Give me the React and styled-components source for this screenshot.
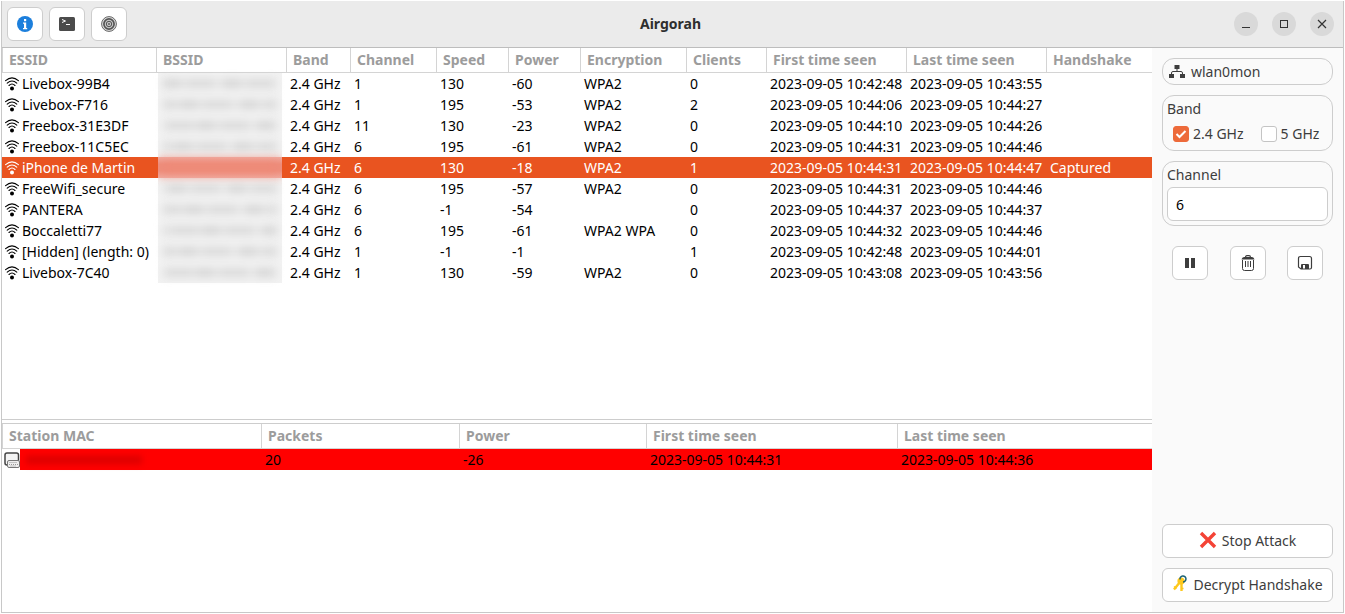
import React, { useState } from 'react';
import styled, { createGlobalStyle } from 'styled-components';

const networks = [
  { essid: 'Livebox-99B4', channel: 1, speed: 130, power: -60, enc: 'WPA2', clients: 0, first: '2023-09-05 10:42:48', last: '2023-09-05 10:43:55' },
  { essid: 'Livebox-F716', channel: 1, speed: 195, power: -53, enc: 'WPA2', clients: 2, first: '2023-09-05 10:44:06', last: '2023-09-05 10:44:27' },
  { essid: 'Freebox-31E3DF', channel: 11, speed: 130, power: -23, enc: 'WPA2', clients: 0, first: '2023-09-05 10:44:10', last: '2023-09-05 10:44:26' },
  { essid: 'Freebox-11C5EC', channel: 6, speed: 195, power: -61, enc: 'WPA2', clients: 0, first: '2023-09-05 10:44:31', last: '2023-09-05 10:44:46' },
  { essid: 'iPhone de Martin', channel: 6, speed: 130, power: -18, enc: 'WPA2', clients: 1, first: '2023-09-05 10:44:31', last: '2023-09-05 10:44:47', handshake: 'Captured' },
  { essid: 'FreeWifi_secure', channel: 6, speed: 195, power: -57, enc: 'WPA2', clients: 0, first: '2023-09-05 10:44:31', last: '2023-09-05 10:44:46' },
  { essid: 'PANTERA', channel: 6, speed: -1, power: -54, enc: '', clients: 0, first: '2023-09-05 10:44:37', last: '2023-09-05 10:44:37' },
  { essid: 'Boccaletti77', channel: 6, speed: 195, power: -61, enc: 'WPA2 WPA', clients: 0, first: '2023-09-05 10:44:32', last: '2023-09-05 10:44:46' },
  { essid: '[Hidden] (length: 0)', channel: 1, speed: -1, power: -1, enc: '', clients: 1, first: '2023-09-05 10:42:48', last: '2023-09-05 10:44:01' },
  { essid: 'Livebox-7C40', channel: 1, speed: 130, power: -59, enc: 'WPA2', clients: 0, first: '2023-09-05 10:43:08', last: '2023-09-05 10:43:56' },
];

const networkColumns = [
  ['ESSID', 155],
  ['BSSID', 130],
  ['Band', 64],
  ['Channel', 86],
  ['Speed', 72],
  ['Power', 72],
  ['Encryption', 106],
  ['Clients', 80],
  ['First time seen', 140],
  ['Last time seen', 140],
  ['Handshake'],
];

const stationColumns = [
  ['Station MAC', 260],
  ['Packets', 198],
  ['Power', 187],
  ['First time seen', 251],
  ['Last time seen'],
];

const InfoIcon = () => (
  <svg width="16" height="16" viewBox="0 0 16 16">
    <circle cx="8" cy="8" r="8" fill="#1c7fdc" />
    <rect x="7" y="3" width="2.200" height="2.200" fill="#fff" />
    <path d="M6 6.500h3.200V12h1v1.200H6V12h1V7.700H6z" fill="#fff" />
  </svg>
);

const TerminalIcon = () => (
  <svg width="16" height="16" viewBox="0 0 16 16">
    <rect x="0" y="1" width="16" height="14" rx="1.500" fill="#4b4b4b" />
    <path d="M3 3.500l3.500 1.500L3 6.500M7 8.500h4" stroke="#fff" fill="none" />
  </svg>
);

const TargetIcon = () => (
  <svg width="16" height="16" viewBox="0 0 16 16" fill="none" stroke="#555">
    <circle cx="8" cy="8" r="7.400" strokeWidth="0.900" fill="#e2e2e2" />
    <circle cx="8" cy="8" r="5.100" strokeWidth="1.700" fill="#c4c4c4" />
    <circle cx="8" cy="8" r="2.700" strokeWidth="1" />
    <circle cx="8" cy="8" r="0.900" fill="#555" stroke="none" />
  </svg>
);

const WifiIcon = () => (
  <svg width="14" height="14" viewBox="0 0 14 14" fill="none" stroke="currentColor" strokeWidth="1.100" strokeLinecap="round">
    <path d="M0.600 3.700Q7-1.900 13.400 3.700" />
    <path d="M2.200 6.200Q7 1.800 11.800 6.200" />
    <path d="M4 8.500Q7 5.500 10 8.500" />
    <circle cx="7" cy="11.500" r="2" fill="currentColor" stroke="none" />
  </svg>
);

const StationIcon = () => (
  <svg width="16" height="16" viewBox="0 0 16 16">
    <rect x="1" y="1" width="13.500" height="12" rx="2" fill="#f4f4f4" stroke="#444" strokeWidth="1.500" />
    <rect x="3.500" y="8.500" width="12" height="7" rx="1.500" fill="#eee" stroke="#777" />
    <path d="M5.500 10.500h8M5 12.500h9M6.500 14h5" stroke="#999" strokeDasharray="1 1" />
  </svg>
);

const NetworkIcon = () => (
  <svg width="16" height="16" viewBox="0 0 16 16">
    <path d="M5.500 1h5v4h-5zM0 10h5v4H0zM11 10h5v4h-5z" fill="#3d3d3d" />
    <path d="M8 5v2.500M2.500 10.500V9Q2.500 7.500 4 7.500h8Q13.500 7.500 13.500 9v1.500" fill="none" stroke="#3d3d3d" />
  </svg>
);

const PauseIcon = () => (
  <svg width="16" height="16" viewBox="0 0 16 16">
    <path d="M3 3h4v10H3zM9 3h4v10H9z" fill="#3d3d3d" />
  </svg>
);

const TrashIcon = () => (
  <svg width="16" height="16" viewBox="0 0 16 16" fill="none" stroke="#3d3d3d">
    <path d="M5.500 2.500Q5.500 0.700 7 0.700h2q1.500 0 1.500 1.800" strokeWidth="1.200" />
    <path d="M1.500 4.500Q2 2 4 2h8q2 0 2.500 2.500z" fill="#3d3d3d" stroke="none" />
    <path d="M2.500 5v8.500q0 2 2 2h7q2 0 2-2V5M5.500 6v6M8 6v6M10.500 6v6" />
  </svg>
);

const SaveIcon = () => (
  <svg width="16" height="16" viewBox="0 0 16 16">
    <path d="M3.500 1.500h9q2 0 2 2v9q0 1.500-1.500 1.500H4l-2.500-2V3.500q0-2 2-2z" fill="none" stroke="#3d3d3d" strokeWidth="1.200" />
    <path d="M4 14V10q0-1 1-1h6q1 0 1 1v4H8v-4H6v4z" fill="#3d3d3d" />
  </svg>
);

const CrossIcon = () => (
  <svg width="18" height="18" viewBox="0 0 18 18">
    <path d="M2 2l14 14M16 2L2 16" stroke="#f44336" strokeWidth="3.400" />
  </svg>
);

const KeyIcon = () => (
  <svg width="16" height="18" viewBox="0 0 16 18" fill="none">
    <circle cx="9" cy="6" r="3.600" fill="#fdc81c" />
    <path d="M8 7L2 14.500M9.500 8v8" stroke="#fdc81c" strokeWidth="2.400" />
    <path d="M2 11.500l2.500 2M9 13.500h2.500" stroke="#fdc81c" strokeWidth="1.500" />
    <path d="M8 4.500A3 3 0 1 1 11 7" stroke="#1a6274" strokeWidth="1.500" />
  </svg>
);

const TreeHead = ({ columns }) => (
  <>
    <colgroup>
      {columns.map(([title, width]) => (
        <Column key={title} $width={width} />
      ))}
    </colgroup>
    <thead>
      <tr>
        {columns.map(([title]) => (
          <HeadCell key={title}>{title}</HeadCell>
        ))}
      </tr>
    </thead>
  </>
);

const App = () => {
  const [selected, setSelected] = useState(4);
  const [band24, setBand24] = useState(true);
  const [band5, setBand5] = useState(false);
  const [channel, setChannel] = useState('6');

  return (
    <>
      <GlobalStyle />
      <Window>
        <TitleBar>
          <TitleSide>
            <IconButton aria-label="About"><InfoIcon /></IconButton>
            <IconButton aria-label="Terminal"><TerminalIcon /></IconButton>
            <IconButton aria-label="Scan"><TargetIcon /></IconButton>
          </TitleSide>
          <Title>Airgorah</Title>
          <WindowControls>
            <RoundButton aria-label="Minimize">
              <svg width="10" height="10"><path d="M1 8.500h8" stroke="#333" /></svg>
            </RoundButton>
            <RoundButton aria-label="Maximize">
              <svg width="10" height="10"><rect x="1.500" y="1.500" width="7" height="7" fill="none" stroke="#333" /></svg>
            </RoundButton>
            <RoundButton aria-label="Close">
              <svg width="10" height="10"><path d="M1 1l8 8M9 1l-8 8" stroke="#333" strokeWidth="1.200" /></svg>
            </RoundButton>
          </WindowControls>
        </TitleBar>

        <Content>
          <Panes>
            <NetworkPane>
              <Tree>
                <TreeHead columns={networkColumns} />
                <tbody>
                  {networks.map((net, index) => (
                    <NetworkRow key={net.essid} $selected={index === selected} onClick={() => setSelected(index)}>
                      <Cell><IconText><WifiIcon />{net.essid}</IconText></Cell>
                      <MaskCell>
                        <Mask $selected={index === selected}>
                          <Smudge $selected={index === selected} $shift={(index * 17) % 40} />
                        </Mask>
                      </MaskCell>
                      <Cell>2.4 GHz</Cell>
                      <Cell>{net.channel}</Cell>
                      <Cell>{net.speed}</Cell>
                      <Cell>{net.power}</Cell>
                      <Cell>{net.enc}</Cell>
                      <Cell>{net.clients}</Cell>
                      <Cell>{net.first}</Cell>
                      <Cell>{net.last}</Cell>
                      <Cell>{net.handshake}</Cell>
                    </NetworkRow>
                  ))}
                </tbody>
              </Tree>
            </NetworkPane>
            <StationPane>
              <Tree>
                <TreeHead columns={stationColumns} />
                <tbody>
                  <StationRow>
                    <StationCell><StationIcon /><StationMask><StationSmudge /></StationMask></StationCell>
                    <Cell>20</Cell>
                    <Cell>-26</Cell>
                    <Cell>2023-09-05 10:44:31</Cell>
                    <Cell>2023-09-05 10:44:36</Cell>
                  </StationRow>
                </tbody>
              </Tree>
            </StationPane>
          </Panes>

          <SideBar>
            <Interface><NetworkIcon />wlan0mon</Interface>
            <Group>
              <GroupLabel>Band</GroupLabel>
              <Checks>
                <CheckLabel>
                  <CheckBox type="checkbox" checked={band24} onChange={() => setBand24(!band24)} />
                  2.4 GHz
                </CheckLabel>
                <CheckLabel>
                  <CheckBox type="checkbox" checked={band5} onChange={() => setBand5(!band5)} />
                  5 GHz
                </CheckLabel>
              </Checks>
            </Group>
            <Group>
              <GroupLabel as="label" htmlFor="channel">Channel</GroupLabel>
              <Entry id="channel" value={channel} onChange={(e) => setChannel(e.target.value)} />
            </Group>
            <Actions>
              <IconButton aria-label="Pause scan"><PauseIcon /></IconButton>
              <IconButton aria-label="Clear results"><TrashIcon /></IconButton>
              <IconButton aria-label="Save capture"><SaveIcon /></IconButton>
            </Actions>
            <Spacer />
            <WideButton><CrossIcon />Stop Attack</WideButton>
            <WideButton><KeyIcon />Decrypt Handshake</WideButton>
          </SideBar>
        </Content>
      </Window>
    </>
  );
};

const GlobalStyle = createGlobalStyle`
  * {
    box-sizing: border-box;
  }
  body {
    margin: 0;
    background: #fff;
    color: #3d3d3d;
    font-family: 'Noto Sans', sans-serif;
    font-size: 14px;
    line-height: 21px;
  }
  button, input {
    font: inherit;
    color: inherit;
  }
  svg {
    display: block;
    flex: none;
  }
`;

const Window = styled.div`
  display: flex;
  flex-direction: column;
  min-height: calc(100vh - 2px);
  margin: 1px;
  border: 1px solid #c8c8c8;
  border-top: none;
`;

const TitleBar = styled.header`
  display: grid;
  grid-template-columns: 1fr auto 1fr;
  align-items: center;
  height: 47px;
  padding: 0 9px 0 5px;
  background: #ebebeb;
  border-bottom: 1px solid #bdbdbd;
`;

const TitleSide = styled.div`
  display: flex;
  gap: 6px;
`;

const Title = styled.h1`
  margin: 0;
  padding-bottom: 2px;
  font-size: 14px;
  font-weight: 700;
  color: #2e2e2e;
`;

const WindowControls = styled.div`
  display: flex;
  justify-content: flex-end;
  gap: 14px;
`;

const IconButton = styled.button`
  display: flex;
  align-items: center;
  justify-content: center;
  width: 36px;
  height: 34px;
  padding: 0;
  background: #fff;
  border: 1px solid #cdcdcd;
  border-radius: 6px;
`;

const RoundButton = styled.button`
  display: flex;
  align-items: center;
  justify-content: center;
  width: 24px;
  height: 24px;
  padding: 0;
  background: #d9d9d9;
  border: none;
  border-radius: 50%;
`;

const Content = styled.main`
  display: flex;
  flex: 1;
`;

const Panes = styled.div`
  display: flex;
  flex: 1;
  flex-direction: column;
  min-width: 0;
  background: #fff;
`;

const NetworkPane = styled.section`
  flex: 1;
  border-bottom: 1px solid #cdcdcd;
`;

const StationPane = styled.section`
  min-height: 189px;
  margin-top: 3px;
  border-top: 1px solid #cdcdcd;
`;

const Tree = styled.table`
  width: 100%;
  table-layout: fixed;
  border-collapse: separate;
  border-spacing: 0;
`;

const Column = styled.col`
  width: ${({ $width }) => ($width ? `${$width}px` : 'auto')};
`;

const HeadCell = styled.th`
  height: 25px;
  padding: 0 6px 2px;
  border-right: 1px solid #d4d4d4;
  border-bottom: 1px solid #d4d4d4;
  color: #9c9c9c;
  font-weight: 700;
  text-align: left;
  white-space: nowrap;
  &:first-child {
    border-left: 1px solid #d4d4d4;
  }
  &:last-child {
    border-right: none;
  }
`;

const Cell = styled.td`
  height: 21px;
  padding: 0 3px;
  white-space: nowrap;
`;

const IconText = styled.span`
  display: flex;
  align-items: center;
  gap: 3px;
`;

const NetworkRow = styled.tr`
  background: ${({ $selected }) => ($selected ? '#e95420' : 'transparent')};
  color: ${({ $selected }) => ($selected ? '#fff' : '#000')};
`;

const MaskCell = styled(Cell)`
  padding: 0 5px 0 1px;
`;

/* hides the hardware address of the access point */
const Mask = styled.div`
  display: flex;
  align-items: center;
  height: 21px;
  padding: 0 5px;
  background: ${({ $selected }) =>
    $selected ? 'linear-gradient(#f0a99e, #ee8d7b 35%, #ee8d7b 65%, #f0a99e)' : '#f2f2f2'};
  ${({ $selected }) =>
    $selected &&
    `
    position: relative;
    z-index: 1;
    box-shadow: 0 0 9px #f2b4aa;
    clip-path: inset(-8px 0);
  `}
`;

const Smudge = styled.div`
  flex: 1;
  height: 9px;
  background: ${({ $selected }) =>
    $selected
      ? '#ee8a78'
      : 'repeating-linear-gradient(90deg, #d6d6d6 0 17px, #e2e2e2 17px 24px, #dadada 24px 51px, #e6e6e6 51px 60px)'};
  background-position: ${({ $shift }) => $shift}px 0;
  filter: blur(4px);
`;

const StationRow = styled.tr`
  background: #f00;
  color: #000;
`;

const StationCell = styled.td`
  display: flex;
  align-items: center;
  height: 21px;
  padding: 0 0 0 2px;
  background: #fff;
`;

const StationMask = styled.div`
  display: flex;
  align-items: center;
  flex: 1;
  height: 21px;
  padding-left: 6px;
  background: #f00;
`;

const StationSmudge = styled.div`
  width: 116px;
  height: 8px;
  background: #dc0000;
  filter: blur(3px);
`;

const SideBar = styled.aside`
  display: flex;
  flex-direction: column;
  gap: 10px;
  width: 191px;
  padding: 10px;
  background: #fafafa;
`;

const Interface = styled.div`
  display: flex;
  align-items: center;
  gap: 6px;
  height: 27px;
  padding: 0 6px;
  border: 1px solid #cdcdcd;
  border-radius: 12px;
`;

const Group = styled.div`
  padding: 2px 4px 4px;
  border: 1px solid #cdcdcd;
  border-radius: 12px;
`;

const GroupLabel = styled.div`
  display: block;
  height: 23px;
`;

const Checks = styled.div`
  display: flex;
  gap: 17px;
  height: 25px;
  padding-left: 6px;
`;

const CheckLabel = styled.label`
  display: flex;
  align-items: center;
  gap: 4px;
  white-space: nowrap;
`;

const CheckBox = styled.input`
  appearance: none;
  width: 16px;
  height: 16px;
  margin: 0;
  background: #fff;
  border: 1px solid #c4c4c4;
  border-radius: 3px;
  &:checked {
    border-color: #ed6a3a;
    background: #ed6a3a url("data:image/svg+xml,%3Csvg xmlns='http://www.w3.org/2000/svg' viewBox='0 0 14 14'%3E%3Cpath d='M2.500 7l3 3 6-6' fill='none' stroke='white' stroke-width='2'/%3E%3C/svg%3E");
  }
`;

const Entry = styled.input`
  display: block;
  width: 100%;
  height: 34px;
  padding: 0 8px;
  color: #000;
  background: #fff;
  border: 1px solid #cdcdcd;
  border-radius: 6px;
`;

const Actions = styled.div`
  display: flex;
  justify-content: space-between;
  padding: 10px 10px 0;
`;

const Spacer = styled.div`
  flex: 1;
`;

const WideButton = styled.button`
  display: flex;
  align-items: center;
  justify-content: center;
  gap: 5px;
  height: 34px;
  padding: 0 0 2px;
  background: #fff;
  border: 1px solid #cdcdcd;
  border-radius: 6px;
  white-space: nowrap;
`;

export default App;
